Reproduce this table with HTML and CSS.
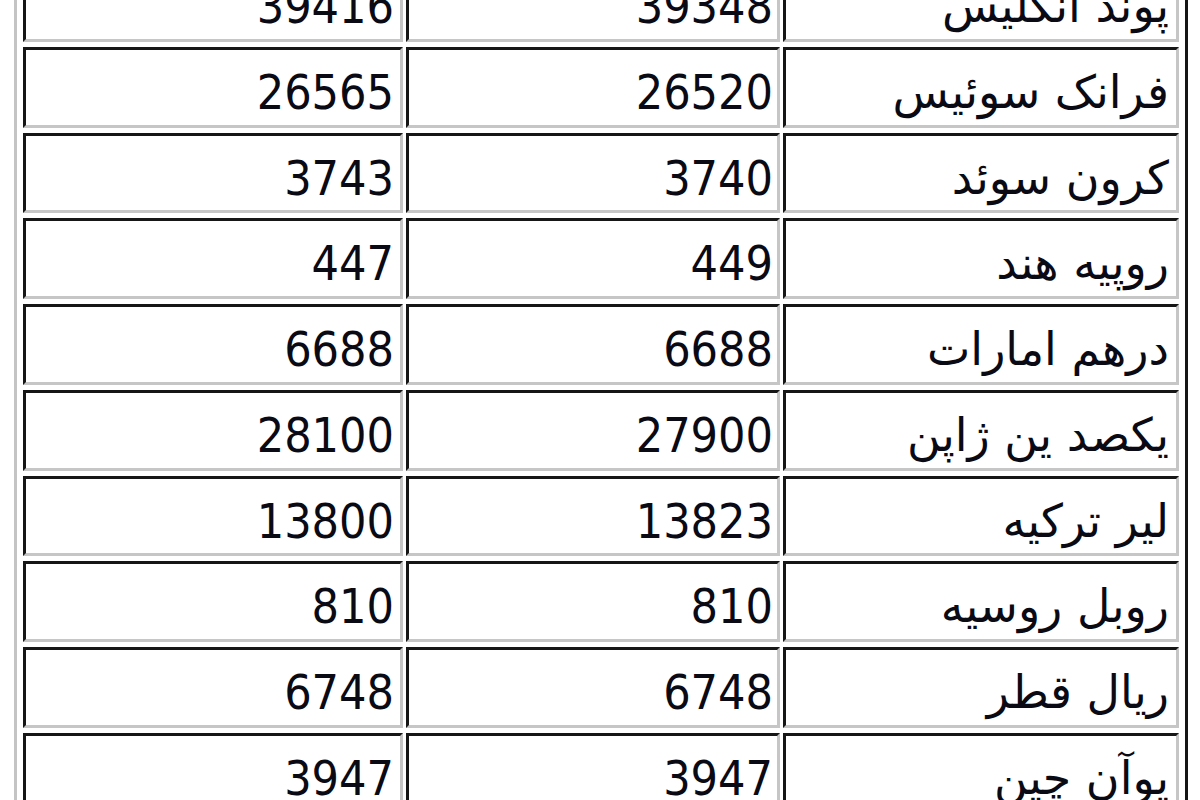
FILE: index.html
```html
<!DOCTYPE html>
<html lang="fa">
<head>
<meta charset="utf-8">
<title>نرخ ارز</title>
<link rel="stylesheet" href="styles.css">
</head>
<body>
<table class="rates" dir="rtl">
<tbody>
<tr><td class="name">پوند انگلیس</td><td class="num mid">39348</td><td class="num left">39416</td></tr>
<tr><td class="name">فرانک سوئیس</td><td class="num mid">26520</td><td class="num left">26565</td></tr>
<tr><td class="name">کرون سوئد</td><td class="num mid">3740</td><td class="num left">3743</td></tr>
<tr><td class="name">روپیه هند</td><td class="num mid">449</td><td class="num left">447</td></tr>
<tr><td class="name">درهم امارات</td><td class="num mid">6688</td><td class="num left">6688</td></tr>
<tr><td class="name">یکصد ین ژاپن</td><td class="num mid">27900</td><td class="num left">28100</td></tr>
<tr><td class="name">لیر ترکیه</td><td class="num mid">13823</td><td class="num left">13800</td></tr>
<tr><td class="name">روبل روسیه</td><td class="num mid">810</td><td class="num left">810</td></tr>
<tr><td class="name">ریال قطر</td><td class="num mid">6748</td><td class="num left">6748</td></tr>
<tr><td class="name">یوآن چین</td><td class="num mid">3947</td><td class="num left">3947</td></tr>
</tbody>
</table>
</body>
</html>
```

FILE: styles.css
```css
html, body {
  margin: 0;
  padding: 0;
  background: #ffffff;
}

body {
  overflow: hidden;
}

.rates {
  margin: -47px 0 0 14px;
  width: 1174px;
  table-layout: fixed;
  border-collapse: separate;
  border-spacing: 3px 5px;
  padding: 0 3px;
  border-style: solid;
  border-width: 3px;
  border-color: #c4c4c4 #161616 #161616 #c4c4c4;
  font-family: "DejaVu Sans Condensed", "Liberation Sans", sans-serif;
  font-size: 48px;
  line-height: 48px;
  color: #0a0a14;
}

.rates td {
  box-sizing: border-box;
  height: 80.75px;
  padding: 18px 8px 0 8px;
  vertical-align: top;
  text-align: right;
  white-space: nowrap;
  border-style: solid;
  border-width: 3px;
  border-color: #161616 #c6c6c6 #c6c6c6 #161616;
}

.rates .name {
  width: 396px;
  font-family: "DejaVu Sans", sans-serif;
  font-size: 46px;
  padding-right: 7px;
}

.rates .mid {
  width: 374px;
  padding-right: 4px;
}

.rates .left {
  width: 380px;
  padding-right: 6px;
}
```
